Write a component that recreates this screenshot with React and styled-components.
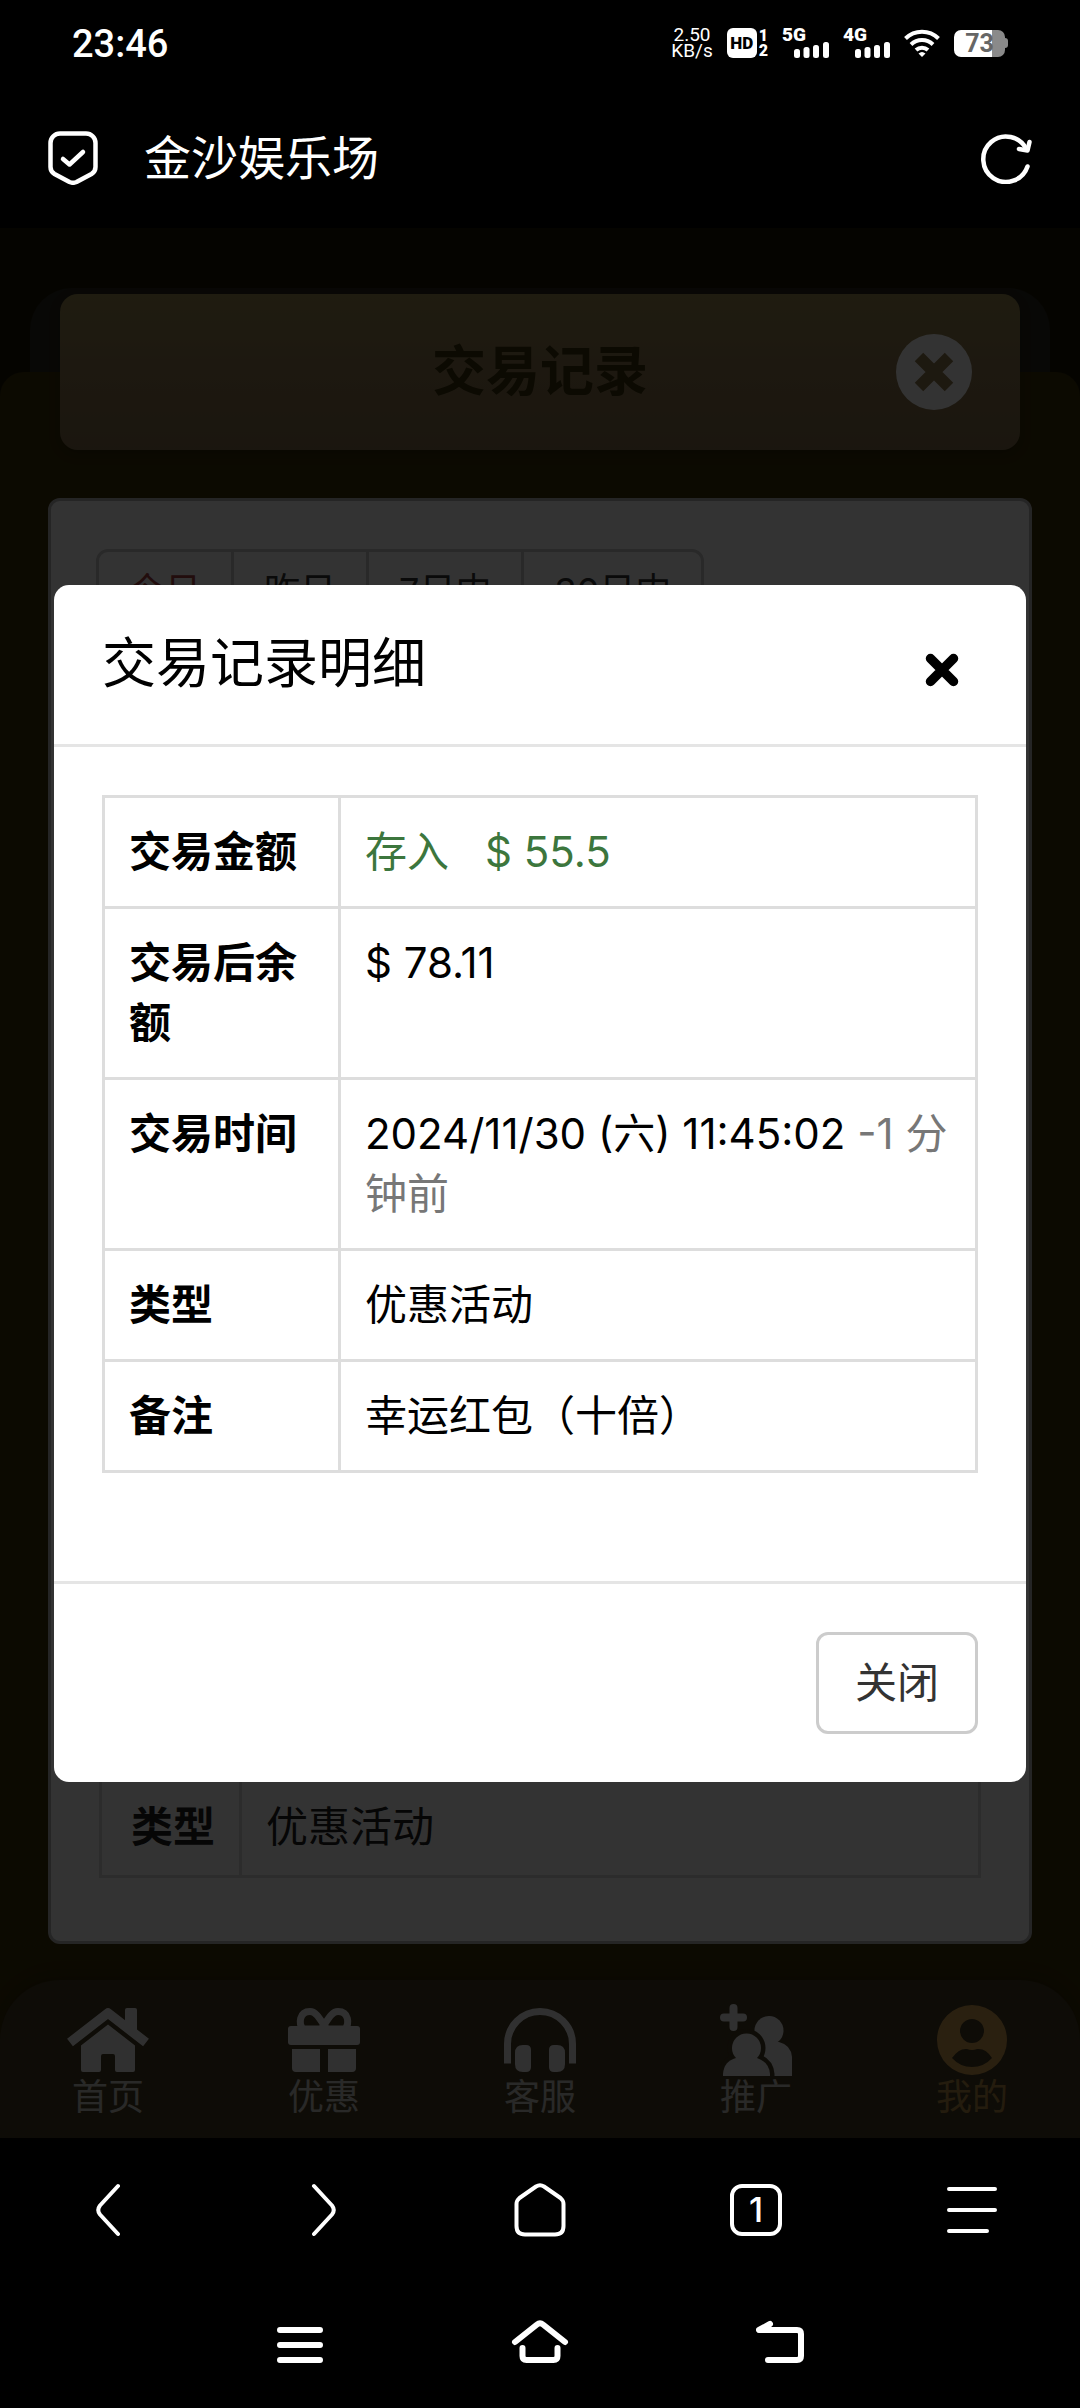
import styled, { createGlobalStyle } from "styled-components";

const GlobalStyle = createGlobalStyle`
  * {
    box-sizing: border-box;
  }
  body {
    margin: 0;
    background: #000;
    font-family: Inter, "Noto Sans CJK SC", sans-serif;
    font-size: 42px;
    line-height: 60px;
    color: #000;
  }
  button {
    font: inherit;
    color: inherit;
    margin: 0;
    padding: 0;
    border: none;
    background: none;
    cursor: pointer;
  }
  svg {
    display: block;
  }
`;

const Screen = styled.div`
  min-height: 100vh;
  display: flex;
  flex-direction: column;
`;

/* ---- phone status bar ---- */

const StatusBar = styled.div`
  height: 88px;
  padding: 0 72px;
  display: flex;
  align-items: center;
  justify-content: space-between;
  color: #fff;
  font-family: Roboto, sans-serif;
`;

const Clock = styled.span`
  font-size: 38px;
  font-weight: 500;
`;

const StatusIcons = styled.div`
  display: flex;
  align-items: center;
  gap: 14px;
  padding-top: 4px;
  padding-bottom: 6px;
`;

const Speed = styled.div`
  display: flex;
  flex-direction: column;
  align-items: center;
  font-size: 19px;
  line-height: 16px;
`;

const HdGroup = styled.div`
  display: flex;
  gap: 2px;
`;

const HdBadge = styled.span`
  width: 30px;
  height: 30px;
  border-radius: 6px;
  background: #fff;
  color: #000;
  font-size: 17px;
  font-weight: 900;
  line-height: 30px;
  text-align: center;
`;

const SimNumbers = styled.div`
  display: flex;
  flex-direction: column;
  font-size: 16px;
  font-weight: 900;
  line-height: 15px;
`;

const Signal = styled.div`
  display: flex;
  flex-direction: column;
  width: 47px;
  font-size: 19px;
  font-weight: 900;
  line-height: 14px;

  svg {
    align-self: flex-end;
  }
`;

const Battery = styled.div`
  display: flex;
  align-items: center;

  &::after {
    content: "";
    width: 3px;
    height: 10px;
    border-radius: 0 3px 3px 0;
    background: #8a8a8a;
  }
`;

const BatteryBody = styled.span`
  width: 51px;
  height: 27px;
  border-radius: 7px;
  background: linear-gradient(to right, #fff 75%, #8a8a8a 75%);
  color: #666;
  font-size: 25px;
  font-weight: 700;
  line-height: 28px;
  text-align: center;
`;

/* ---- browser chrome ---- */

const AddressBar = styled.header`
  height: 140px;
  padding: 0 48px;
  display: flex;
  align-items: center;
  color: #fff;
`;

const SiteName = styled.span`
  flex: 1;
  margin-left: 46px;
  font-size: 47px;
`;

const BrowserBar = styled.nav`
  height: 144px;
  display: flex;
  color: #fff;
`;

const SystemBar = styled.nav`
  height: 126px;
  padding: 0 calc(100% / 6);
  display: flex;
  color: #fff;
`;

const BarButton = styled.button`
  flex: 1;
  display: flex;
  align-items: center;
  justify-content: center;
`;

const TabCount = styled.span`
  width: 52px;
  height: 52px;
  border: 4px solid #fff;
  border-radius: 12px;
  font-size: 34px;
  font-weight: 500;
  line-height: 44px;
`;

/* ---- web page ---- */

const WebView = styled.div`
  position: relative;
  flex: 1;
  display: flex;
  flex-direction: column;
  background: #1b1804;
`;

const HeroCard = styled.div`
  height: 84px;
  margin: 60px 30px 0;
  border-radius: 42px 42px 0 0;
  background: #2b281e;
`;

const Main = styled.main`
  flex: 1;
  display: flex;
  flex-direction: column;
  border-radius: 24px 24px 0 0;
  background: #3e3208;
`;

const Content = styled.div`
  flex: 1;
  display: flex;
  flex-direction: column;
  padding: 0 48px 36px;
`;

const TitleBar = styled.div`
  height: 156px;
  margin: -78px 12px 48px;
  padding: 0 48px;
  display: grid;
  grid-template-columns: 76px 1fr 76px;
  align-items: center;
  border-radius: 18px;
  background: linear-gradient(#9b8b50, #90784f 50%, #84704c);
  box-shadow: 0 4px 12px rgba(0, 0, 0, 0.2);
`;

const PageTitle = styled.h1`
  grid-column: 2;
  margin: 0;
  color: #3c320c;
  font-size: 54px;
  font-weight: 700;
  text-align: center;
`;

const Panel = styled.section`
  flex: 1;
  display: flex;
  flex-direction: column;
  justify-content: space-between;
  align-items: flex-start;
  padding: 48px 45px 63px;
  border: 3px solid #bbb;
  border-radius: 12px;
  background: #fff;
`;

const RangeTabs = styled.div`
  display: flex;
  border: 3px solid #ccc;
  border-radius: 12px;
`;

const RangeTab = styled.button`
  padding: 12px 30px;
  font-size: 36px;
  line-height: 54px;
  color: ${(props) => (props.$active ? "#a94442" : "#333")};

  & + & {
    border-left: 3px solid #ccc;
  }
`;

const Table = styled.table`
  width: 100%;
  border-collapse: collapse;

  th,
  td {
    padding: 24px;
    border: 3px solid #ddd;
    text-align: left;
    vertical-align: top;
  }
  th {
    font-weight: 700;
  }
`;

const RecordTable = styled(Table)`
  width: calc(100% - 6px);
  margin: 0 3px;

  th,
  td {
    padding-bottom: 18px;
    color: #222;
  }
  th {
    width: 140px;
    text-align: right;
  }
`;

const TabBar = styled.nav`
  height: 158px;
  padding-top: 24px;
  display: flex;
  border-radius: 60px 60px 0 0;
  background: #463c23;
  box-shadow: 0 -4px 16px rgba(0, 0, 0, 0.2);
`;

const TabLink = styled.a`
  flex: 1;
  display: flex;
  flex-direction: column;
  align-items: center;
  color: ${(props) => (props.$active ? "#d2a050" : "#f0f0f0")};
  font-size: 36px;
  line-height: 42px;
  text-decoration: none;
`;

const TabIcon = styled.span`
  height: 72px;
  display: flex;
  align-items: center;
`;

const TabLabel = styled.span`
  opacity: 0.8;
`;

/* ---- dialog ---- */

const Backdrop = styled.div`
  position: absolute;
  inset: 0;
  display: flex;
  align-items: center;
  justify-content: center;
  background: rgba(0, 0, 0, 0.8);
`;

const Dialog = styled.div`
  width: 90%;
  border-radius: 15px;
  background: #fff;
`;

const DialogHeader = styled.div`
  height: 162px;
  padding: 0 48px;
  display: flex;
  align-items: center;
  justify-content: space-between;
  border-bottom: 3px solid #e5e5e5;
`;

const DialogTitle = styled.h2`
  margin: 0;
  font-size: 54px;
  font-weight: 400;
`;

const IconButton = styled.button`
  padding: 12px 19px 0;
`;

const DialogBody = styled.div`
  padding: 48px 48px 108px;
`;

const DetailTable = styled(Table)`
  th {
    width: 236px;
  }
`;

const Income = styled.span`
  color: #3c763d;
`;

const Amount = styled.span`
  margin-left: 36px;
`;

const Muted = styled.span`
  color: #777;
`;

const DialogFooter = styled.div`
  padding: 48px;
  display: flex;
  justify-content: flex-end;
  border-top: 3px solid #e5e5e5;
`;

const CloseButton = styled.button`
  padding: 18px 36px;
  border: 3px solid #ccc;
  border-radius: 12px;
  color: #333;
`;

/* ---- icons ---- */

const Line = ({ width, height, stroke = 4, children }) => (
  <svg
    width={width}
    height={height}
    viewBox={`0 0 ${width} ${height}`}
    fill="none"
    stroke="currentColor"
    strokeWidth={stroke}
    strokeLinecap="round"
    strokeLinejoin="round"
    aria-hidden="true"
  >
    {children}
  </svg>
);

const Solid = ({ width, height, children }) => (
  <svg
    width={width}
    height={height}
    viewBox={`0 0 ${width} ${height}`}
    fill="currentColor"
    aria-hidden="true"
  >
    {children}
  </svg>
);

const ShieldIcon = () => (
  <Line width={50} height={54} stroke={4.5}>
    <path d="M12 2.5H38A9.5 9.5 0 0 1 47.5 12V36C47.5 39 46 41.5 43.5 43L28.5 51Q25 52.6 21.5 51L6.5 43C4 41.5 2.5 39 2.5 36V12A9.5 9.5 0 0 1 12 2.5Z" />
    <path d="M15 28L21.5 33.5L35 21" />
  </Line>
);

const RefreshIcon = () => (
  <Line width={51} height={51} stroke={4.5}>
    <path d="M46.5 33.5A22.7 22.7 0 1 1 45.5 16.5" />
    <path d="M48.5 9L46.5 17.5L38 16" />
  </Line>
);

const BarsIcon = () => (
  <Solid width={35} height={16}>
    <rect x="0" y="7" width="6" height="9" rx="2.5" />
    <rect x="9.5" y="5" width="6" height="11" rx="2.5" />
    <rect x="19" y="3" width="6" height="13" rx="2.5" />
    <rect x="29" y="0" width="6" height="16" rx="2.5" />
  </Solid>
);

const WifiIcon = () => (
  <Line width={36} height={29}>
    <g strokeLinecap="butt">
      <path d="M1.5 9.5A23.5 23.5 0 0 1 34.5 9.5" />
      <path d="M7 15.5A16 16 0 0 1 29 15.5" />
      <path d="M12 21A9 9 0 0 1 24 21" />
    </g>
    <path d="M18 28L14.5 24.5Q18 21.5 21.5 24.5Z" fill="currentColor" stroke="none" />
  </Line>
);

const CircleCloseIcon = () => (
  <svg width="76" height="76" viewBox="0 0 76 76" aria-hidden="true">
    <circle cx="38" cy="38" r="38" fill="#fff" />
    <path d="M23 23L53 53M53 23L23 53" stroke="#927c50" strokeWidth="12" />
  </svg>
);

const CrossIcon = () => (
  <Line width={34} height={34} stroke={9.5}>
    <path d="M5.5 5.5L28.5 28.5M28.5 5.5L5.5 28.5" />
  </Line>
);

const HouseIcon = () => (
  <Solid width={84} height={64}>
    <path
      d="M4 34.5L42 5L80 34.5"
      fill="none"
      stroke="currentColor"
      strokeWidth="9.5"
      strokeLinejoin="round"
    />
    <path d="M59 2Q59 0 61 0H69Q71 0 71 2V28L59 19Z" />
    <path d="M42 16.5L69 37.5V62Q69 64 67 64H51Q49 64 49 62V48Q49 46 47 46H37Q35 46 35 48V62Q35 64 33 64H17Q15 64 15 62V37.5Z" />
  </Solid>
);

const GiftIcon = () => (
  <Solid width={72} height={64}>
    <path
      d="M36 17C30 8 27 3.5 22 3.5C11 3.5 10.5 16 15 21H33ZM36 17C42 8 45 3.5 50 3.5C61 3.5 61.5 16 57 21H39Z"
      fill="none"
      stroke="currentColor"
      strokeWidth="7"
      strokeLinejoin="round"
    />
    <rect x="0" y="18" width="72" height="19" rx="3" />
    <path d="M4 41H32V64H8Q4 64 4 60ZM40 41H68V60Q68 64 64 64H40Z" />
  </Solid>
);

const HeadphonesIcon = () => (
  <Solid width={72} height={64}>
    <path
      d="M3.5 52V36A32.5 32.5 0 0 1 68.5 36V52"
      fill="none"
      stroke="currentColor"
      strokeWidth="7"
      strokeLinecap="square"
    />
    <path d="M19 37H22Q27 37 27 42V59Q27 64 22 64H19Q11 64 11 56V45Q11 37 19 37Z" />
    <path d="M53 37H50Q45 37 45 42V59Q45 64 50 64H53Q61 64 61 56V45Q61 37 53 37Z" />
  </Solid>
);

const InviteIcon = () => (
  <Solid width={72} height={72}>
    <path d="M13.5 4V23M4 13.5H23" stroke="currentColor" strokeWidth="8" strokeLinecap="round" />
    <circle cx="49" cy="26.5" r="14.5" />
    <path d="M42 72V38H59Q71 41 72 53V72Z" />
    <g stroke="#463c23" strokeWidth="9">
      <circle cx="26.5" cy="44" r="14.5" />
      <path d="M3 80V70Q4 57 16 54H37Q49 58 50 70V80Z" />
    </g>
    <circle cx="26.5" cy="44" r="14.5" />
    <path d="M3 72V70Q4 57 16 54H37Q49 58 50 70V72Z" />
  </Solid>
);

const UserIcon = () => (
  <Solid width={70} height={70}>
    <path
      fillRule="evenodd"
      d="M35 0A35 35 0 1 1 35 70A35 35 0 1 1 35 0ZM35 14A12 12 0 1 0 35 38A12 12 0 1 0 35 14ZM15 53Q22 43 30 44Q35 46 40 44Q49 43 55 53Q47 62 35 62Q23 62 15 53Z"
    />
  </Solid>
);

const tabs = [
  { label: "首页", icon: <HouseIcon /> },
  { label: "优惠", icon: <GiftIcon /> },
  { label: "客服", icon: <HeadphonesIcon /> },
  { label: "推广", icon: <InviteIcon /> },
  { label: "我的", icon: <UserIcon />, active: true },
];

const ranges = ["今日", "昨日", "7日内", "30日内"];

const App = () => {
  return (
    <Screen>
      <GlobalStyle />
      <StatusBar>
        <Clock>23:46</Clock>
        <StatusIcons>
          <Speed>
            <span>2.50</span>
            <span>KB/s</span>
          </Speed>
          <HdGroup>
            <HdBadge>HD</HdBadge>
            <SimNumbers>
              <span>1</span>
              <span>2</span>
            </SimNumbers>
          </HdGroup>
          <Signal>
            5G
            <BarsIcon />
          </Signal>
          <Signal>
            4G
            <BarsIcon />
          </Signal>
          <WifiIcon />
          <Battery>
            <BatteryBody>73</BatteryBody>
          </Battery>
        </StatusIcons>
      </StatusBar>
      <AddressBar>
        <ShieldIcon />
        <SiteName>金沙娱乐场</SiteName>
        <button type="button" aria-label="刷新">
          <RefreshIcon />
        </button>
      </AddressBar>

      <WebView>
        <HeroCard />
        <Main>
          <Content>
            <TitleBar>
              <PageTitle>交易记录</PageTitle>
              <button type="button" aria-label="返回">
                <CircleCloseIcon />
              </button>
            </TitleBar>
            <Panel>
              <RangeTabs>
                {ranges.map((range, i) => (
                  <RangeTab type="button" key={range} $active={i === 0}>
                    {range}
                  </RangeTab>
                ))}
              </RangeTabs>
              <RecordTable>
                <tbody>
                  <tr>
                    <th scope="row">类型</th>
                    <td>优惠活动</td>
                  </tr>
                </tbody>
              </RecordTable>
            </Panel>
          </Content>
          <TabBar>
            {tabs.map((tab) => (
              <TabLink href="#" key={tab.label} $active={tab.active}>
                <TabIcon>{tab.icon}</TabIcon>
                <TabLabel>{tab.label}</TabLabel>
              </TabLink>
            ))}
          </TabBar>
        </Main>

        <Backdrop>
          <Dialog role="dialog" aria-labelledby="detail-title">
            <DialogHeader>
              <DialogTitle id="detail-title">交易记录明细</DialogTitle>
              <IconButton type="button" aria-label="关闭">
                <CrossIcon />
              </IconButton>
            </DialogHeader>
            <DialogBody>
              <DetailTable>
                <tbody>
                  <tr>
                    <th scope="row">交易金额</th>
                    <td>
                      <Income>
                        存入<Amount>$ 55.5</Amount>
                      </Income>
                    </td>
                  </tr>
                  <tr>
                    <th scope="row">交易后余额</th>
                    <td>$ 78.11</td>
                  </tr>
                  <tr>
                    <th scope="row">交易时间</th>
                    <td>
                      2024/11/30 (六) 11:45:02 <Muted>-1 分钟前</Muted>
                    </td>
                  </tr>
                  <tr>
                    <th scope="row">类型</th>
                    <td>优惠活动</td>
                  </tr>
                  <tr>
                    <th scope="row">备注</th>
                    <td>幸运红包（十倍）</td>
                  </tr>
                </tbody>
              </DetailTable>
            </DialogBody>
            <DialogFooter>
              <CloseButton type="button">关闭</CloseButton>
            </DialogFooter>
          </Dialog>
        </Backdrop>
      </WebView>

      <BrowserBar>
        <BarButton type="button" aria-label="后退">
          <Line width={26} height={54}>
            <path d="M23 3L5 22.5Q1.5 27 5 31.5L23 51" />
          </Line>
        </BarButton>
        <BarButton type="button" aria-label="前进">
          <Line width={26} height={54}>
            <path d="M3 3L21 22.5Q24.5 27 21 31.5L3 51" />
          </Line>
        </BarButton>
        <BarButton type="button" aria-label="主页">
          <Line width={52} height={54}>
            <path d="M22 3.5Q26 1 30 3.5L46.5 15Q49.5 17.5 49.5 21V43Q49.5 51.5 41 51.5H11Q2.5 51.5 2.5 43V21Q2.5 17.5 5.5 15Z" />
          </Line>
        </BarButton>
        <BarButton type="button" aria-label="标签页">
          <TabCount>1</TabCount>
        </BarButton>
        <BarButton type="button" aria-label="菜单">
          <Line width={50} height={46}>
            <path d="M2 2H48M2 23H48M2 44H40" />
          </Line>
        </BarButton>
      </BrowserBar>
      <SystemBar>
        <BarButton type="button" aria-label="最近任务">
          <Line width={46} height={36} stroke={6}>
            <path d="M3 3H43M3 18H43M3 33H43" />
          </Line>
        </BarButton>
        <BarButton type="button" aria-label="桌面">
          <Line width={58} height={50} stroke={6}>
            <path d="M4 22L26 4.5Q29 2 32 4.5L54 22" />
            <path d="M11.5 28V36Q11.5 40 15.5 40H42.5Q46.5 40 46.5 36V28" />
          </Line>
        </BarButton>
        <BarButton type="button" aria-label="返回">
          <Line width={48} height={50} stroke={6}>
            <path d="M14 4L3 10H41Q45 10 45 14V36Q45 40 41 40H12" />
          </Line>
        </BarButton>
      </SystemBar>
    </Screen>
  );
};

export default App;
